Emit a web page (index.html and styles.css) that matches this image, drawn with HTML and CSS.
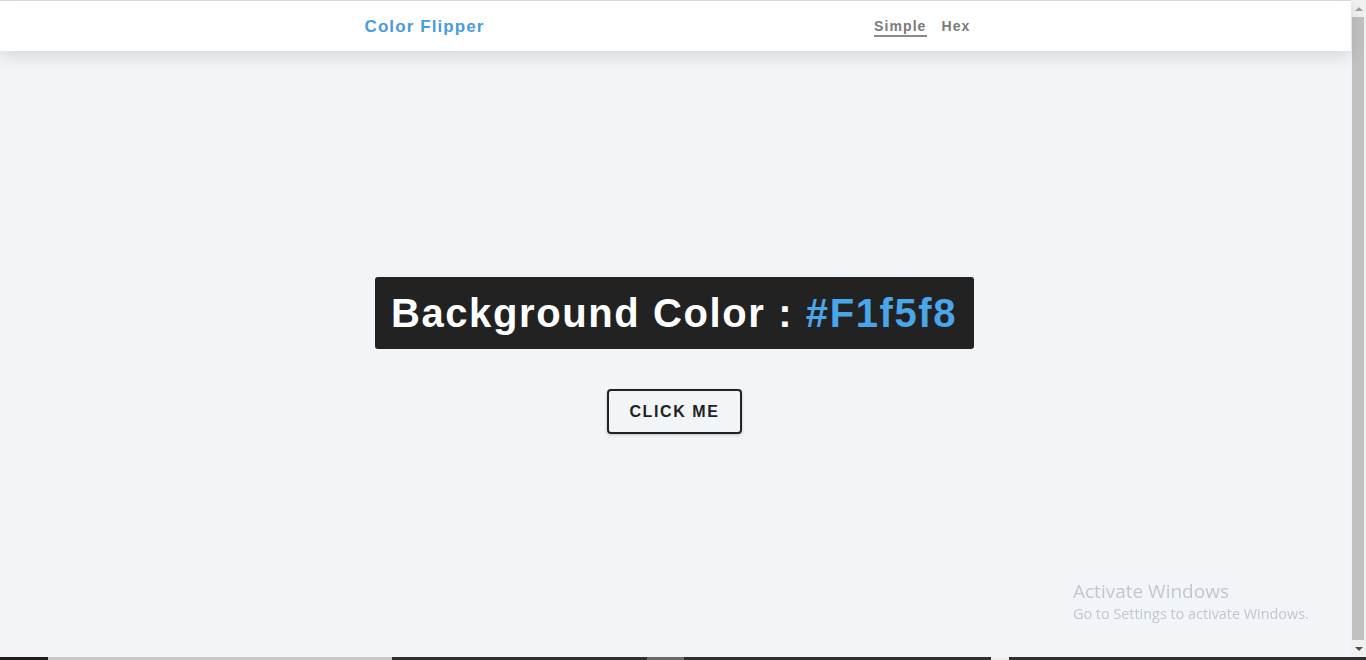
FILE: index.html
```html
<!DOCTYPE html>
<html lang="en">
<head>
<meta charset="utf-8">
<title>Color Flipper</title>
<link rel="stylesheet" href="styles.css">
</head>
<body>
<div class="screen">
  <div class="window">
    <div class="page">
      <nav class="nav">
        <div class="nav-center">
          <h4 class="logo">Color Flipper</h4>
          <ul class="links">
            <li><a class="link active" href="#">Simple</a></li>
            <li><a class="link" href="#">Hex</a></li>
          </ul>
        </div>
      </nav>
      <main class="main">
        <div class="container">
          <h2 class="title">Background Color : <span class="color">#F1f5f8</span></h2>
          <button class="btn" type="button">click me</button>
        </div>
      </main>
    </div>
    <div class="scrollbar">
      <div class="arrow"><span class="tri up"></span></div>
      <div class="thumb"></div>
      <div class="arrow"><span class="tri down"></span></div>
    </div>
  </div>
  <div class="taskbar">
    <span class="seg dark" style="width:48px"></span>
    <span class="seg light" style="width:344px"></span>
    <span class="seg dark2" style="width:255px"></span>
    <span class="seg mid" style="width:37px"></span>
    <span class="seg dark2" style="width:307px"></span>
    <span class="seg white" style="width:18px"></span>
    <span class="seg dark2 grow"></span>
  </div>
  <div class="watermark">
    <div class="wm-title">Activate Windows</div>
    <div class="wm-sub">Go to Settings to activate Windows.</div>
  </div>
</div>
</body>
</html>
```

FILE: styles.css
```css
* { box-sizing: border-box; margin: 0; padding: 0; }

html, body {
  width: 1366px;
  height: 660px;
  overflow: hidden;
}

body {
  font-family: "Liberation Sans", Arial, sans-serif;
  background: #f1f5f8;
  color: #222;
}

.screen {
  width: 1366px;
  height: 660px;
  display: flex;
  flex-direction: column;
}

.window {
  flex: 1;
  display: flex;
  min-height: 0;
}

.page {
  flex: 1;
  display: flex;
  flex-direction: column;
  background: #f1f5f8;
  border-top: 1px solid #dcdcdc;
}

.nav {
  height: 50px;
  background: #fff;
  box-shadow: 0 5px 15px rgba(0, 0, 0, 0.12);
  position: relative;
  z-index: 1;
  padding-right: 2px;
}

.nav-center {
  width: 620px;
  height: 100%;
  margin: 0 auto;
  display: flex;
  align-items: center;
  justify-content: space-between;
}

.logo {
  font-size: 17px;
  font-weight: 700;
  letter-spacing: 1.1px;
  color: #4a9bdc;
  padding-top: 1px;
}

.links {
  list-style: none;
  display: flex;
  gap: 15px;
  padding-right: 14px;
}

.link {
  display: block;
  text-decoration: none;
  font-size: 14px;
  font-weight: 700;
  letter-spacing: 1.1px;
  color: #7a7a7a;
  line-height: 17px;
  padding-top: 2px;
  border-bottom: 2px solid transparent;
}

.link.active {
  border-bottom-color: #8a8a8a;
}

.main {
  flex: 1;
  display: flex;
  align-items: center;
  justify-content: center;
  padding-right: 2px;
}

.container {
  display: flex;
  flex-direction: column;
  align-items: center;
  gap: 40px;
  padding-top: 2px;
}

.title {
  background: #222;
  color: #fff;
  font-size: 40px;
  font-weight: 700;
  letter-spacing: 1.6px;
  line-height: 50px;
  padding: 11px 17px 11px 16px;
  border-radius: 3px;
}

.color {
  color: #49a6e9;
}

.btn {
  font-family: "Liberation Sans", Arial, sans-serif;
  font-size: 16px;
  font-weight: 700;
  letter-spacing: 1.6px;
  text-transform: uppercase;
  line-height: 19px;
  color: #222;
  background: transparent;
  border: 2px solid #222;
  border-radius: 4px;
  padding: 11px 20px;
  box-shadow: 0 1px 3px rgba(0, 0, 0, 0.2);
}

.scrollbar {
  width: 15px;
  display: flex;
  flex-direction: column;
  background: #f1f1f1;
}

.arrow {
  height: 17px;
  display: flex;
  align-items: center;
  justify-content: center;
}

.tri {
  width: 0;
  height: 0;
  border-left: 4px solid transparent;
  border-right: 4px solid transparent;
}

.tri.up {
  border-bottom: 4px solid #a3a3a3;
}

.tri.down {
  border-top: 4px solid #505050;
}

.thumb {
  flex: 1;
  margin: 0 2px 0 1px;
  background: #c1c1c1;
}

.taskbar {
  height: 3px;
  display: flex;
}

.seg { display: block; height: 100%; }
.seg.dark { background: #1e1e1e; }
.seg.dark2 { background: #2f2f2f; }
.seg.light { background: #c8c8c8; }
.seg.mid { background: #6a6a6a; }
.seg.white { background: #f0f0f0; }
.seg.grow { flex: 1; }

.watermark {
  position: fixed;
  left: 1073px;
  top: 579px;
  font-family: "Open Sans", "Noto Sans", sans-serif;
  color: #c3c7cb;
}

.wm-title {
  font-size: 19px;
  line-height: 25px;
}

.wm-sub {
  font-size: 14.4px;
  line-height: 20px;
}
```
